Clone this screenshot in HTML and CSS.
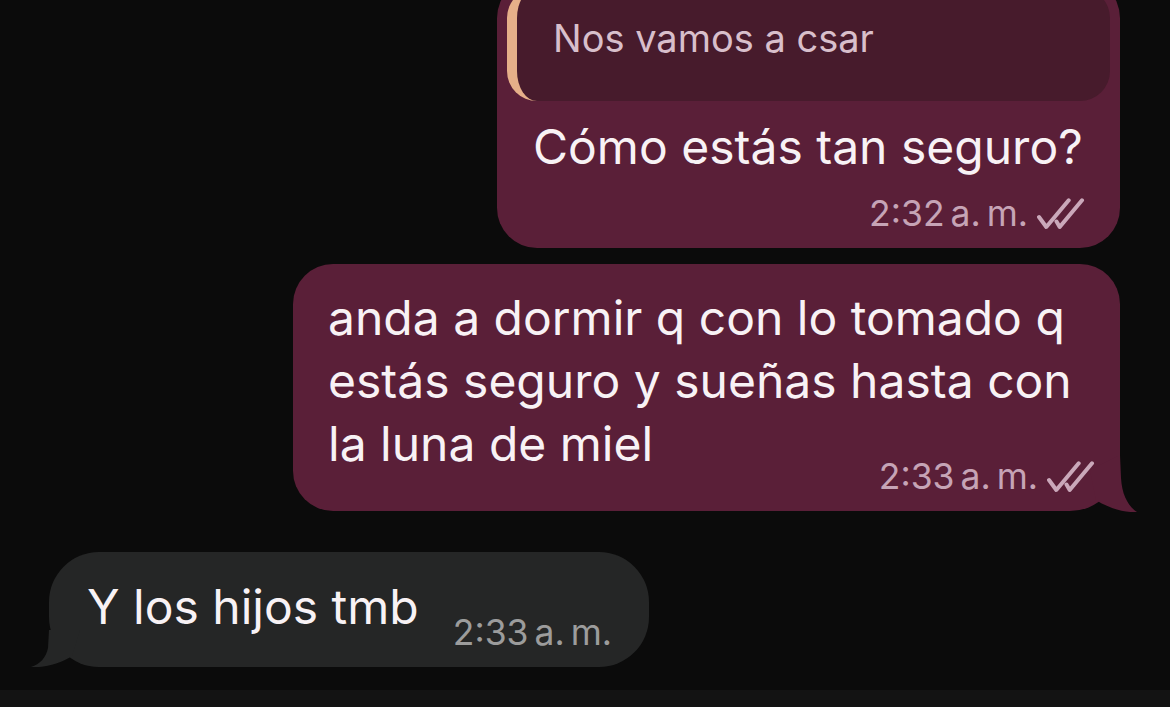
FILE: index.html
```html
<!DOCTYPE html>
<html lang="es">
<head>
<meta charset="utf-8">
<title>Chat</title>
<link rel="stylesheet" href="styles.css">
</head>
<body>
<div class="chat">
  <div class="row out">
    <div class="bubble b1">
      <div class="quote">
        <div class="quote-text">Nos vamos a csar</div>
      </div>
      <div class="msg msg1">Cómo estás tan seguro?</div>
      <div class="meta meta-out meta1">
        <span class="time">2:32 a. m.</span>
        <svg class="ticks" width="48" height="34" viewBox="0 0 48 34"><path d="M2 20 L9.3 30 L31.7 3.3 M19.5 24.5 L22.7 30 L45 3.3" fill="none" stroke="#caa8ba" stroke-width="4" stroke-linecap="round" stroke-linejoin="round"/></svg>
      </div>
    </div>
  </div>
  <div class="row out row2">
    <div class="bubble b2">
      <div class="msg msg2">anda a dormir q con lo tomado q<br>estás seguro y sueñas hasta con<br>la luna de miel</div>
      <div class="meta meta-out meta2">
        <span class="time">2:33 a. m.</span>
        <svg class="ticks" width="48" height="34" viewBox="0 0 48 34"><path d="M2 20 L9.3 30 L31.7 3.3 M19.5 24.5 L22.7 30 L45 3.3" fill="none" stroke="#caa8ba" stroke-width="4" stroke-linecap="round" stroke-linejoin="round"/></svg>
      </div>
      <svg class="tail tail-r" width="60" height="60" viewBox="0 0 60 60"><path d="M40 3 L41 26 C42 43 48 54 57 60 C45 61 28 56 16 48 L10 18 Z" fill="#5a1f38"/></svg>
    </div>
  </div>
  <div class="row in row3">
    <div class="bubble b3">
      <div class="msg msg3">Y los hijos tmb</div>
      <div class="meta meta-in"><span class="time">2:33 a. m.</span></div>
      <svg class="tail tail-l" width="60" height="60" viewBox="0 0 60 60"><path d="M20 23 L19 41 C17 51 11 57 2 60 C15 61 31 57 43 49 L51 23 Z" fill="#252626"/></svg>
    </div>
  </div>
</div>
<div class="bottombar"></div>
</body>
</html>
```
FILE: styles.css
```css
html, body {
  margin: 0;
  padding: 0;
}
body {
  background: #0b0b0b;
  font-family: Inter, "Noto Sans", sans-serif;
  height: 707px;
  overflow: hidden;
  color: #f7f1f4;
}
.chat {
  height: 690px;
  box-sizing: border-box;
  padding-bottom: 23px;
  display: flex;
  flex-direction: column;
  justify-content: flex-end;
  overflow: hidden;
}
.row {
  display: flex;
  flex-shrink: 0;
}
.row.out {
  justify-content: flex-end;
  padding-right: 50px;
}
.row.in {
  justify-content: flex-start;
  padding-left: 49px;
}
.row2 {
  margin-top: 16px;
}
.row3 {
  margin-top: 41px;
}
.bubble {
  position: relative;
  box-sizing: border-box;
}
.b1 {
  width: 623px;
  background: #5a1f38;
  border-radius: 40px;
  padding: 10px 10px 16px;
  display: flex;
  flex-direction: column;
}
.quote {
  background: #471b2c;
  border-left: 10px solid #e6af89;
  border-radius: 30px;
  padding: 30px 30px 43px 36px;
}
.quote-text {
  font-size: 38px;
  line-height: 40px;
  color: #d8bfcb;
}
.msg {
  font-size: 48px;
  white-space: nowrap;
  color: #f8f2f5;
}
.msg1 {
  margin: 20px 26px 0;
  line-height: 52px;
}
.meta {
  display: flex;
  align-items: center;
  justify-content: flex-end;
  font-size: 35.5px;
  line-height: 36px;
  word-spacing: -4px;
  white-space: nowrap;
}
.meta-out {
  color: #c6a4b6;
}
.meta1 {
  margin: 23px 25px 0 0;
}
.ticks {
  margin-left: 9px;
  flex-shrink: 0;
}
.b2 {
  width: 827px;
  background: #5a1f38;
  border-radius: 40px 40px 50px 40px;
  padding: 22px 25px 16px 35px;
}
.msg2 {
  line-height: 63px;
}
.meta2 {
  margin-top: -16px;
}
.tail {
  position: absolute;
  bottom: -1px;
}
.tail-r {
  right: -20px;
}
.tail-l {
  left: -20px;
  bottom: 0;
}
.b3 {
  width: 600px;
  background: #252626;
  border-radius: 50px;
  padding: 23px 37px 16px 38px;
  display: flex;
  align-items: flex-start;
}
.msg3 {
  line-height: 63px;
}
.meta-in {
  color: #9c9c9c;
  margin-left: auto;
  margin-top: 40px;
}
.bottombar {
  height: 17px;
  background: #131313;
}
```
